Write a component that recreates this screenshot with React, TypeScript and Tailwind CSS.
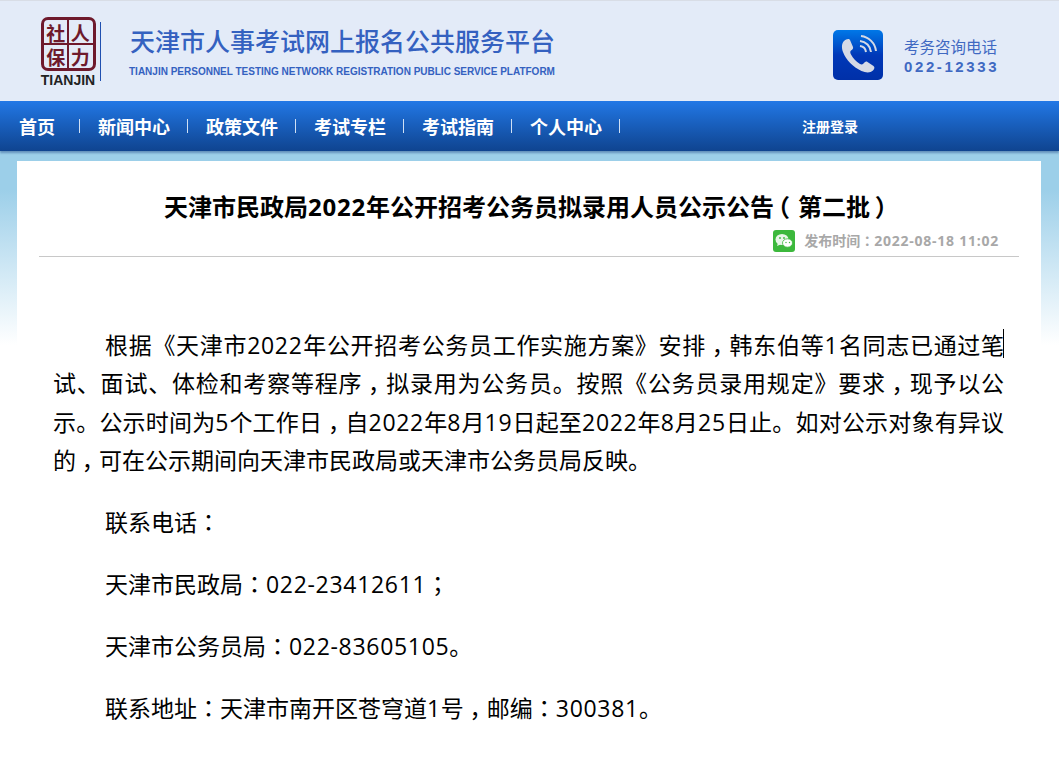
import { Fragment } from "react";

const navItems = ["首页", "新闻中心", "政策文件", "考试专栏", "考试指南", "个人中心"];

const paragraphs = [
  "联系电话：",
  "天津市民政局：022-23412611；",
  "天津市公务员局：022-83605105。",
  "联系地址：天津市南开区苍穹道1号，邮编：300381。",
];

// the original font sits ，（） nearer the middle of the cell than Noto does
const punctClass: Record<string, string> = {
  "，": "relative left-[0.25em]",
  "（": "relative -left-[0.33em]",
  "）": "relative left-[0.2em]",
  "：": "",
  "；": "",
};

// digits also run a little wide
const Rich = ({ text }: { text: string }) => (
  <>
    {text.split(/([，：；（）]|[0-9][0-9-]*)/).map((part, i) => {
      if (part in punctClass) {
        return (
          <span key={i} className={`font-['Noto_Sans_CJK_KR',sans-serif] leading-none ${punctClass[part]}`}>
            {part}
          </span>
        );
      }
      if (/^[0-9]/.test(part)) {
        return (
          <span key={i} className="tracking-[0.03em]">
            {part}
          </span>
        );
      }
      return part;
    })}
  </>
);

const Logo = () => (
  <div className="flex w-[58px] flex-col items-center pt-[2px]">
    <div className="relative grid h-[54px] w-[55px] grid-cols-2 grid-rows-2 rounded-[7px] border-[3px] border-[#6e1a2c] font-['Noto_Sans_CJK_SC',sans-serif] text-[19px] leading-none font-bold text-[#6e1a2c]">
      {["社", "人", "保", "力"].map((c) => (
        <span key={c} className="flex items-center justify-center">
          {c}
        </span>
      ))}
      <span className="absolute top-0 bottom-0 left-[23px] w-[2px] bg-[#6e1a2c]" />
      <span className="absolute top-[23px] right-0 left-0 h-[2px] bg-[#6e1a2c]" />
    </div>
    <span className="mt-[2px] font-['Liberation_Sans',sans-serif] text-[14px] leading-[14px] font-bold text-[#222]">
      TIANJIN
    </span>
  </div>
);

const PhoneIcon = () => (
  <div className="flex h-[50px] w-[50px] items-center justify-center rounded-[5px] bg-gradient-to-b from-[#0078e8] via-[#0038b8] to-[#0030a8]">
    <svg viewBox="0 0 50 50" className="h-[50px] w-[50px]">
      <path
        d="M11 11c2-2 5-3 6-1l3 7c.5 1.500-.5 2.500-2 3.500-1 .8-1 2 0 4 2 4 5 7 9 9.500 1.500.8 2.500.5 3.500-.5 1.500-1.500 2.500-2.500 4-1.500l6 4c1.500 1 1 3-.5 4.500-2.500 2.500-7 2.500-11.500.5C20 37 13 30 10 22c-1.500-4-1.500-8.500 1-11z"
        fill="#d5dae6"
      />
      <path
        d="M27 16a7 7 0 0 1 6 6M27 11a12 12 0 0 1 11 11M28 6a17 17 0 0 1 15 15"
        fill="none"
        stroke="#d5dae6"
        strokeWidth="2"
      />
    </svg>
  </div>
);

const WechatIcon = () => (
  <div className="flex h-[22px] w-[22px] items-center justify-center rounded-[3px] bg-[#3cb83c]">
    <svg viewBox="0 0 22 22" className="h-[22px] w-[22px]">
      <ellipse cx="9" cy="9.500" rx="6.500" ry="5.500" fill="#e8f5e8" />
      <path d="M5 13l-1 3 3.500-1.500z" fill="#e8f5e8" />
      <ellipse cx="14.500" cy="13" rx="5" ry="4.200" fill="#fff" stroke="#3cb83c" strokeWidth="0.800" />
      <circle cx="7" cy="8" r="0.900" fill="#3cb83c" />
      <circle cx="11" cy="8" r="0.900" fill="#3cb83c" />
      <circle cx="13" cy="12.500" r="0.700" fill="#3cb83c" />
      <circle cx="16.500" cy="12.500" r="0.700" fill="#3cb83c" />
    </svg>
  </div>
);

const App = () => {
  return (
    <div className="h-[757px] w-[1059px] overflow-hidden bg-gradient-to-b from-[#9ccfe9] from-[190px] to-white to-[345px] font-['Open_Sans','Noto_Sans_CJK_SC',sans-serif]">
      <header className="flex h-[101px] items-center border-t border-[#d8dde6] bg-[#e3ebf8] pl-[39px]">
        <Logo />
        <div className="ml-[3px] h-[59px] w-px bg-[#1f4fb0]" />
        <div className="ml-[28px] w-[440px]">
          <h1 className="pl-px font-['Noto_Sans_CJK_SC',sans-serif] text-[25px] leading-[30px] font-medium whitespace-nowrap text-[#3461c0]">
            天津市人事考试网上报名公共服务平台
          </h1>
          <p className="mt-[11px] font-['Liberation_Sans',sans-serif] text-[10px] leading-[12px] font-bold whitespace-nowrap text-[#3461c0]">
            TIANJIN PERSONNEL TESTING NETWORK REGISTRATION PUBLIC SERVICE PLATFORM
          </p>
        </div>
        <div className="mt-[8px] ml-[264px]">
          <PhoneIcon />
        </div>
        <div className="mt-[10px] ml-[21px] text-[#3f69c2]">
          <p className="font-['Noto_Sans_CJK_SC',sans-serif] text-[15.500px] leading-[20px] whitespace-nowrap">考务咨询电话</p>
          <p className="mt-[2px] font-['Liberation_Sans',sans-serif] text-[15px] leading-[18px] font-bold tracking-[2.600px]">
            022-12333
          </p>
        </div>
      </header>

      <nav className="flex h-[50px] items-center bg-gradient-to-b from-[#2278e6] to-[#0f4490] pl-[19px] text-white shadow-[0_2px_2px_rgba(30,70,130,0.45)]">
        {navItems.map((item, i) => (
          <Fragment key={item}>
            <a className={`font-['Noto_Sans_CJK_SC',sans-serif] text-[18px] leading-none font-bold whitespace-nowrap ${i === 0 ? "w-[43px]" : "w-[72px]"}`}>
              {item}
            </a>
            <span className="mr-[18px] ml-[17px] h-[14px] w-px bg-[#cfe0f5]" />
          </Fragment>
        ))}
        <a className="ml-[164px] font-['Noto_Sans_CJK_SC',sans-serif] text-[14px] leading-none font-bold whitespace-nowrap">注册登录</a>
      </nav>

      <main className="mx-[17px] mt-[10px] w-[1024px] bg-white px-[22px]">
        <div className="flex h-[96px] flex-col border-b border-[#c8c8c8]">
          <h2 className="mt-[29px] text-center text-[24px] leading-[34px] font-bold text-black">
            <Rich text="天津市民政局2022年公开招考公务员拟录用人员公示公告（第二批）" />
          </h2>
          <div className="mt-[6px] flex items-center justify-end gap-[9px] pr-[20px]">
            <WechatIcon />
            <span className="text-[14px] leading-[22px] font-bold text-[#a8a8a8]">
              发布时间<span className="font-['Noto_Sans_CJK_KR',sans-serif] leading-none">：</span>
              <span className="tracking-[0.75px]">2022-08-18 11:02</span>
            </span>
          </div>
        </div>

        <article className="pt-[68.500px] pr-[15px] pl-[14px] text-[23px] text-black">
          <p className="relative text-justify indent-[52px] leading-[38.6px]">
            <Rich text="根据《天津市2022年公开招考公务员工作实施方案》安排，韩东伯等1名同志已通过笔试、面试、体检和考察等程序，拟录用为公务员。按照《公务员录用规定》要求，现予以公示。公示时间为5个工作日，自2022年8月19日起至2022年8月25日止。如对公示对象有异议的，可在公示期间向天津市民政局或天津市公务员局反映。" />
            <span className="absolute top-[3px] right-0 h-[29px] w-px bg-black" />
          </p>
          {paragraphs.map((p) => (
            <p key={p} className="mt-[23.300px] indent-[52px] leading-[38.6px]">
              <Rich text={p} />
            </p>
          ))}
        </article>
      </main>
    </div>
  );
};

export default App;
